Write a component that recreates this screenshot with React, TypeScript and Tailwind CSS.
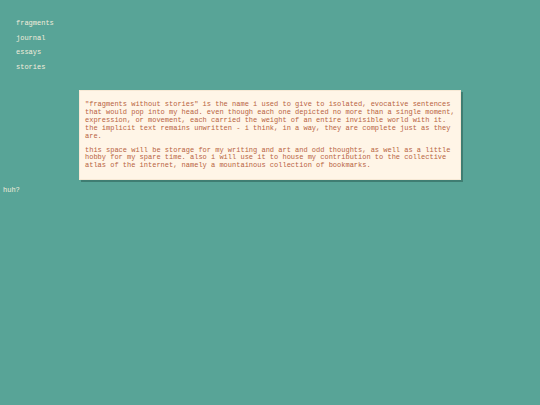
import React from 'react';

const links = ['fragments', 'journal', 'essays', 'stories'];

export default function App() {
  return (
    <div className="min-h-[405px] w-full bg-[#58a497] font-['Liberation_Mono','Courier_New',monospace] text-[7px] leading-[1.12]">
      <nav className="flex flex-col gap-[6.7px] pl-4 pt-[20px]">
        {links.map((l) => (
          <a key={l} href="#" className="text-[#f3ecdc]">
            {l}
          </a>
        ))}
      </nav>

      <div className="ml-[79px] mt-[19px] w-[382px] border border-[#f7e9d6] bg-[#fff5e7] px-[5px] pb-[9px] pt-[10px] text-[#b8633f] shadow-[2px_2px_0_#3f7d72]">
        <p>
          "fragments without stories" is the name i used to give to isolated, evocative sentences
          that would pop into my head. even though each one depicted no more than a single moment,
          expression, or movement, each carried the weight of an entire invisible world with it.
          the implicit text remains unwritten - i think, in a way, they are complete just as they
          are.
        </p>
        <p className="mt-[6px]">
          this space will be storage for my writing and art and odd thoughts, as well as a little
          hobby for my spare time. also i will use it to house my contribution to the collective
          atlas of the internet, namely a mountainous collection of bookmarks.
        </p>
      </div>

      <div className="pl-[3px] pt-[7px] text-[#f3ecdc]">huh?</div>
    </div>
  );
}
